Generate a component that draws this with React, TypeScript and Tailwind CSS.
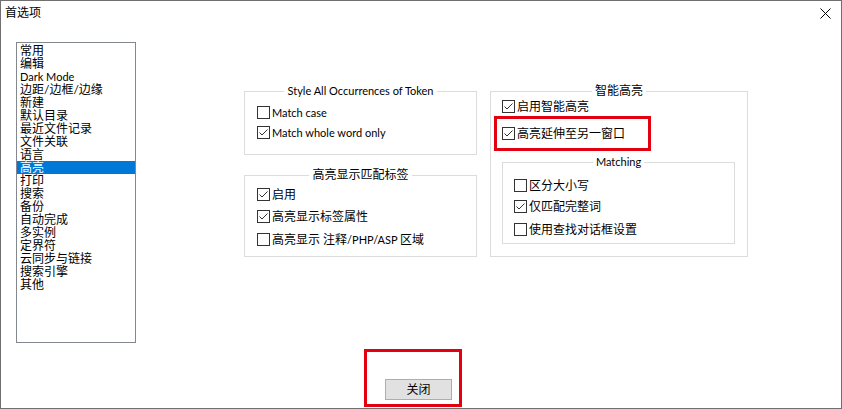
const font = { fontFamily: "Lato, 'Noto Sans CJK SC', sans-serif" }

const items = [
  '常用', '编辑', 'Dark Mode', '边距/边框/边缘', '新建', '默认目录', '最近文件记录', '文件关联', '语言', '高亮',
  '打印', '搜索', '备份', '自动完成', '多实例', '定界符', '云同步与链接', '搜索引擎', '其他',
]

// Latin runs are a touch smaller so they come out at the Segoe UI widths
const latin = 'text-[11px]'

function Box({ checked }: { checked?: boolean }) {
  return (
    <span className="w-[13px] h-[13px] border border-[#333333] bg-white flex-none flex items-center justify-center">
      {checked && (
        <svg width="11" height="11" viewBox="0 0 11 11">
          <polyline points="1.5,5.5 4,8 9.5,2.5" fill="none" stroke="#333333" strokeWidth="1" />
        </svg>
      )}
    </span>
  )
}

function Check({ label, checked, className = '' }: { label: React.ReactNode; checked?: boolean; className?: string }) {
  return (
    <div className={`flex items-start ${className}`}>
      <div className="flex items-center h-[13px]">
        <Box checked={checked} />
        <span className="ml-[2px] text-[12px] leading-[13px] text-black whitespace-nowrap">{label}</span>
      </div>
    </div>
  )
}

function Legend({ children }: { children: React.ReactNode }) {
  return <legend className="mx-auto px-[3px] text-[12px] leading-[14px] h-[14px] text-black">{children}</legend>
}

export default function App() {
  return (
    <div className="w-[842px] h-[409px] bg-white border border-[#707070] relative flex flex-col" style={font}>
      <div className="h-[41px] flex justify-between items-start">
        <span className="pl-[4px] pt-[5px] text-[12px] leading-[14px] text-black">首选项</span>
        <svg className="mt-[7px] mr-[10px]" width="11" height="11" viewBox="0 0 11 11">
          <path d="M0.5 0.5 L10.5 10.5 M10.5 0.5 L0.5 10.5" stroke="#000" strokeWidth="1" />
        </svg>
      </div>

      <div className="flex">
        <div className="ml-[15px] w-[120px] h-[301px] border border-[#828790] pt-[1px] flex flex-col">
          {items.map((it) => (
            <div
              key={it}
              className={`h-[13px] leading-[13px] pl-[3px] whitespace-nowrap ${
                it === 'Dark Mode' ? latin : 'text-[12px]'
              } ${it === '高亮' ? 'bg-[#0078d7] text-white' : 'text-black'}`}
            >
              {it}
            </div>
          ))}
        </div>

        <div className="ml-[108px] mt-[42px] flex gap-[13px] items-start">
          <div className="w-[233px] flex flex-col gap-[13px]">
            <fieldset className="h-[71px] border border-[#dcdcdc] pt-[8px]">
              <Legend>
                <span className={latin}>Style All Occurrences of Token</span>
              </Legend>
              <div className="pl-[12px]">
                <Check label={<span className={latin}>Match case</span>} className="h-[20px]" />
                <Check label={<span className={latin}>Match whole word only</span>} checked className="h-[20px]" />
              </div>
            </fieldset>
            <fieldset className="h-[89px] border border-[#dcdcdc] pt-[6px]">
              <Legend>高亮显示匹配标签</Legend>
              <div className="pl-[12px]">
                <Check label="启用" checked className="h-[22px]" />
                <Check label="高亮显示标签属性" checked className="h-[23px]" />
                <Check
                  label={
                    <>
                      高亮显示 注释<span className={latin}>/PHP/ASP </span>区域
                    </>
                  }
                  className="h-[13px]"
                />
              </div>
            </fieldset>
          </div>

          <fieldset className="w-[258px] h-[173px] border border-[#dcdcdc] pt-[2px]">
            <Legend>智能高亮</Legend>
            <div className="pl-[11px]">
              <Check label="启用智能高亮" checked className="h-[27px]" />
              <Check label="高亮延伸至另一窗口" checked className="h-[28px]" />
              <fieldset className="w-[233px] h-[89px] border border-[#dcdcdc] pt-[10px]">
                <Legend>
                  <span className={latin}>Matching</span>
                </Legend>
                <div className="pl-[11px]">
                  <Check label="区分大小写" className="h-[21px]" />
                  <Check label="仅匹配完整词" checked className="h-[23px]" />
                  <Check label="使用查找对话框设置" className="h-[13px]" />
                </div>
              </fieldset>
            </div>
          </fieldset>
        </div>
      </div>

      <div className="mt-[33px] ml-[384px]">
        <button className="w-[67px] h-[21px] bg-[#e1e1e1] border border-[#adadad] text-[12px] leading-[19px] text-black">
          关闭
        </button>
      </div>

      <div className="absolute left-[493px] top-[115px] w-[157px] h-[35px] border-[3px] border-[#e3000f]" />
      <div className="absolute left-[363px] top-[348px] w-[98px] h-[58px] border-[3px] border-[#e3000f]" />
    </div>
  )
}
